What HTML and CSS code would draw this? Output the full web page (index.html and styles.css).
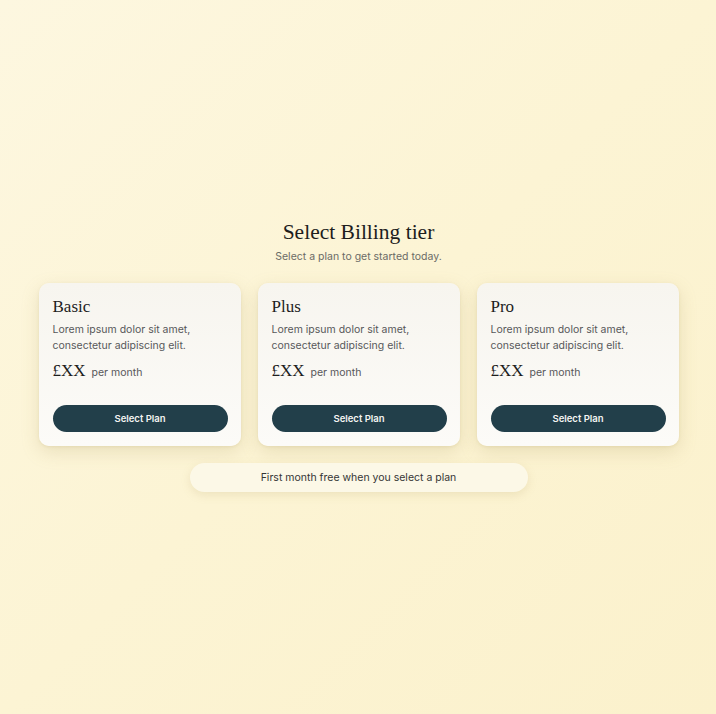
FILE: index.html
```html
<!DOCTYPE html>
<html lang="en">
<head>
<meta charset="utf-8">
<title>Select Billing tier</title>
<link rel="stylesheet" href="styles.css">
</head>
<body>
<main class="page">
  <section class="billing">
    <header class="head">
      <h1 class="title">Select Billing tier</h1>
      <p class="subtitle">Select a plan to get started today.</p>
    </header>
    <div class="cards">
      <article class="card">
        <h2 class="card-title">Basic</h2>
        <p class="card-desc">Lorem ipsum dolor sit amet, consectetur adipiscing elit.</p>
        <div class="price"><span class="amount">£XX</span><span class="period">per month</span></div>
        <button class="btn">Select Plan</button>
      </article>
      <article class="card">
        <h2 class="card-title">Plus</h2>
        <p class="card-desc">Lorem ipsum dolor sit amet, consectetur adipiscing elit.</p>
        <div class="price"><span class="amount">£XX</span><span class="period">per month</span></div>
        <button class="btn">Select Plan</button>
      </article>
      <article class="card">
        <h2 class="card-title">Pro</h2>
        <p class="card-desc">Lorem ipsum dolor sit amet, consectetur adipiscing elit.</p>
        <div class="price"><span class="amount">£XX</span><span class="period">per month</span></div>
        <button class="btn">Select Plan</button>
      </article>
    </div>
    <div class="banner">First month free when you select a plan</div>
  </section>
</main>
</body>
</html>
```
FILE: styles.css
```css
html, body {
  margin: 0;
  padding: 0;
  height: 100%;
}
body {
  background: linear-gradient(135deg, #fdf7e0 0%, #fcf4d4 50%, #fbf1cc 100%);
  font-family: "Inter", "Liberation Sans", sans-serif;
  color: #333;
}
.page {
  min-height: 100%;
  display: flex;
  align-items: center;
  justify-content: center;
}
.billing {
  display: flex;
  flex-direction: column;
  align-items: center;
  padding-bottom: 4px;
  margin-left: 1px;
}
.head {
  text-align: center;
  margin-bottom: 19px;
}
.title {
  margin: 0;
  font-family: "Liberation Serif", "DejaVu Serif", serif;
  font-weight: 400;
  font-size: 21.5px;
  line-height: 26px;
  color: #1d1d1d;
}
.subtitle {
  margin: 5px 0 0;
  font-size: 10.5px;
  line-height: 14px;
  color: #6b6b66;
}
.cards {
  display: flex;
  gap: 17px;
}
.card {
  width: 202px;
  box-sizing: border-box;
  padding: 13px 13px 14px 14px;
  border-radius: 10px;
  background: linear-gradient(180deg, #f7f5ef 0%, #fcfbf8 100%);
  box-shadow: 0 6px 18px rgba(170, 150, 90, 0.22), 0 1px 3px rgba(170, 150, 90, 0.15);
  display: flex;
  flex-direction: column;
}
.card-title {
  margin: 0;
  font-family: "Liberation Serif", "DejaVu Serif", serif;
  font-weight: 400;
  font-size: 17px;
  line-height: 22px;
  color: #1d1d1d;
}
.card-desc {
  margin: 4px 0 0;
  font-size: 10.5px;
  line-height: 16px;
  color: #57575a;
}
.price {
  display: flex;
  align-items: baseline;
  gap: 6px;
  margin-top: 6px;
}
.amount {
  font-family: "Liberation Serif", "DejaVu Serif", serif;
  font-size: 17px;
  line-height: 22px;
  color: #1d1d1d;
}
.period {
  font-size: 10.5px;
  color: #57575a;
}
.btn {
  margin-top: 23px;
  height: 27px;
  border: none;
  border-radius: 14px;
  background: #223f4a;
  color: #f4f4f2;
  font-family: "Inter", "Liberation Sans", sans-serif;
  font-size: 9.5px;
  font-weight: 600;
  cursor: pointer;
}
.banner {
  margin-top: 17px;
  width: 338px;
  height: 29px;
  box-sizing: border-box;
  border-radius: 15px;
  background: #fcf8e7;
  box-shadow: 0 3px 10px rgba(170, 150, 90, 0.18);
  display: flex;
  align-items: center;
  justify-content: center;
  font-size: 10.5px;
  color: #353535;
}
```
